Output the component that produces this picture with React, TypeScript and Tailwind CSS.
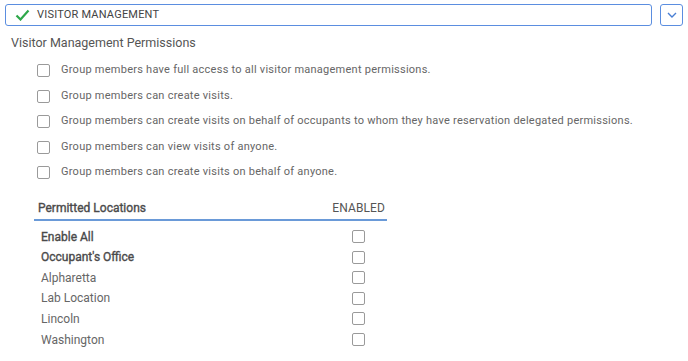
import React from 'react';

const permissions = [
  'Group members have full access to all visitor management permissions.',
  'Group members can create visits.',
  'Group members can create visits on behalf of occupants to whom they have reservation delegated permissions.',
  'Group members can view visits of anyone.',
  'Group members can create visits on behalf of anyone.',
];

const locations = [
  { name: 'Enable All', strong: true },
  { name: "Occupant's Office", strong: true },
  { name: 'Alpharetta', strong: false },
  { name: 'Lab Location', strong: false },
  { name: 'Lincoln', strong: false },
  { name: 'Washington', strong: false },
];

const Box = () => (
  <span className="block w-[13px] h-[13px] rounded-[2px] border border-[#9a9a9a] bg-white" />
);

const App: React.FC = () => {
  return (
    <div className="w-[688px] h-[361px] bg-white overflow-hidden font-['Roboto',sans-serif] text-[#555]">
      {/* section header */}
      <div className="flex items-center gap-2 pl-[5px] pr-[5px] pt-[4px]">
        <div className="flex-1 h-[22px] flex items-center border border-[#5b8ee0] rounded-[3px] pl-[9px]">
          <svg width="15" height="12" viewBox="0 0 15 12" className="mr-[7px]">
            <path d="M1.5 6.5 L5.5 10.5 L13.5 1.5" fill="none" stroke="#2ea84a" strokeWidth="2.2" />
          </svg>
          <span className="text-[11px] text-[#444] tracking-[0.2px]">VISITOR MANAGEMENT</span>
        </div>
        <button className="w-[23px] h-[22px] flex items-center justify-center border border-[#5b8ee0] rounded-[3px]">
          <svg width="10" height="6" viewBox="0 0 10 6">
            <path d="M1 1 L5 5 L9 1" fill="none" stroke="#4a7fd4" strokeWidth="1.4" />
          </svg>
        </button>
      </div>

      <div className="pl-[11px] pt-[8px] text-[12.5px] text-[#555]">Visitor Management Permissions</div>

      <div className="pl-[37px] pt-[5px] flex flex-col">
        {permissions.map((p) => (
          <div key={p} className="h-[25.5px] flex items-center gap-[11px]">
            <Box />
            <span className="text-[11px] tracking-[0.25px] text-[#666]">{p}</span>
          </div>
        ))}
      </div>

      <div className="ml-[34px] mt-[12px] w-[353px]">
        <div className="flex items-center justify-between h-[24px] pl-[4px] pr-[2px] border-b-2 border-[#6a9ad8] text-[12px] text-[#555]">
          <span className="text-[#4a4a4a] [-webkit-text-stroke:0.35px_#4a4a4a]">Permitted Locations</span>
          <span className="tracking-[0.1px]">ENABLED</span>
        </div>
        <div className="pt-[5px] flex flex-col">
          {locations.map((l) => (
            <div key={l.name} className="h-[20.6px] flex items-center justify-between pl-[7px] pr-[22px]">
              <span
                className={`text-[12px] ${
                  l.strong ? 'text-[#4a4a4a] [-webkit-text-stroke:0.35px_#4a4a4a]' : 'text-[#666]'
                }`}
              >
                {l.name}
              </span>
              <Box />
            </div>
          ))}
        </div>
      </div>
    </div>
  );
};

export default App;
